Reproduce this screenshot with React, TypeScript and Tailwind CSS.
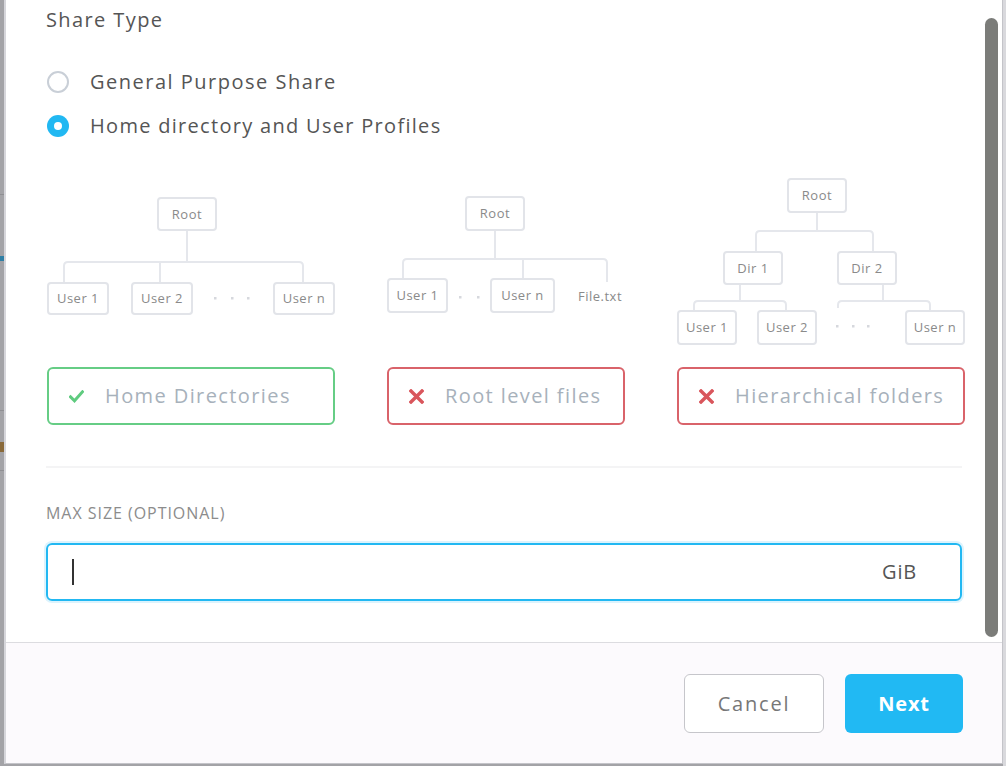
import React from "react";

const FONT = { fontFamily: '"Open Sans", "Noto Sans", sans-serif' };

type BoxProps = { x: number; y: number; w: number; h: number; label: string };
const Box = ({ x, y, w, h, label }: BoxProps) => (
  <g>
    <rect x={x + 1} y={y + 1} width={w - 2} height={h - 2} rx={3} fill="white" stroke="#e2e4e9" strokeWidth={2} />
    <text
      x={x + w / 2}
      y={y + h / 2 + 4.5}
      textAnchor="middle"
      fontSize={13}
      fill="#8a8a8a"
      letterSpacing={0.5}
      style={FONT}
    >
      {label}
    </text>
  </g>
);

const LC = "#e5e7ec";

const Bar = ({ x1, x2, y, d1, d2 }: { x1: number; x2: number; y: number; d1: number; d2: number }) => {
  const r = 4;
  return (
    <path
      d={`M${x1} ${d1} L${x1} ${y + r} Q${x1} ${y} ${x1 + r} ${y} L${x2 - r} ${y} Q${x2} ${y} ${x2} ${y + r} L${x2} ${d2}`}
      fill="none"
      stroke={LC}
      strokeWidth={2}
    />
  );
};
const VLine = ({ x, y1, y2 }: { x: number; y1: number; y2: number }) => (
  <line x1={x} y1={y1} x2={x} y2={y2} stroke={LC} strokeWidth={2} />
);
const Dots = ({ xs, y }: { xs: number[]; y: number }) => (
  <g>
    {xs.map((x) => (
      <rect key={x} x={x - 1} y={y - 1} width={2.5} height={2.5} fill="#d6d8dd" />
    ))}
  </g>
);

const Diagram1 = () => (
  <svg width={288} height={180} className="block shrink-0">
    <VLine x={140} y1={61} y2={92} />
    <Bar x1={17} x2={256} y={92} d1={112} d2={112} />
    <VLine x={113} y1={92} y2={112} />
    <Box x={110} y={27} w={60} h={34} label="Root" />
    <Box x={0} y={112} w={62} h={33} label="User 1" />
    <Box x={84} y={112} w={62} h={33} label="User 2" />
    <Dots xs={[168, 185, 201]} y={128} />
    <Box x={226} y={112} w={62} h={33} label="User n" />
  </svg>
);

const Diagram2 = () => (
  <svg width={238} height={180} className="block shrink-0">
    <VLine x={108} y1={61} y2={89} />
    <Bar x1={16} x2={220} y={89} d1={108} d2={112} />
    <VLine x={136} y1={89} y2={108} />
    <Box x={78} y={26} w={60} h={35} label="Root" />
    <Box x={0} y={108} w={61} h={35} label="User 1" />
    <Dots xs={[73, 91]} y={127} />
    <Box x={103} y={108} w={65} h={35} label="User n" />
    <text x={191} y={131} fontSize={13} fill="#8a8a8a" letterSpacing={0.5} style={FONT}>
      File.txt
    </text>
  </svg>
);

const Diagram3 = () => (
  <svg width={288} height={180} className="block shrink-0">
    <VLine x={140} y1={43} y2={61} />
    <Bar x1={79} x2={196} y={61} d1={81} d2={81} />
    <Box x={110} y={8} w={60} h={35} label="Root" />
    <Box x={46} y={81} w={60} h={34} label="Dir 1" />
    <Box x={160} y={81} w={60} h={34} label="Dir 2" />
    <VLine x={63} y1={115} y2={131} />
    <Bar x1={17} x2={109} y={131} d1={140} d2={140} />
    <VLine x={206} y1={115} y2={131} />
    <Bar x1={161} x2={253} y={131} d1={138} d2={140} />
    <Box x={0} y={140} w={60} h={35} label="User 1" />
    <Box x={80} y={140} w={60} h={35} label="User 2" />
    <Dots xs={[160, 176, 191]} y={156} />
    <Box x={228} y={140} w={60} h={35} label="User n" />
  </svg>
);

const CheckIcon = () => (
  <svg width={15} height={13} viewBox="0 0 15 13" className="block">
    <path d="M1.5 6.8 L5.5 10.8 L13.5 1.8" fill="none" stroke="#5fcb7f" strokeWidth={3} strokeLinecap="square" />
  </svg>
);
const XIcon = () => (
  <svg width={15} height={15} viewBox="0 0 15 15" className="block">
    <path d="M2 2 L13 13 M13 2 L2 13" fill="none" stroke="#d9565c" strokeWidth={3.4} strokeLinecap="square" />
  </svg>
);

const Card = ({ ok, label, w }: { ok: boolean; label: string; w: string }) => (
  <div
    className={`${w} shrink-0 h-[58px] rounded-[6px] border-2 flex items-center pl-[19px] ${
      ok ? "border-[#66cd85]" : "border-[#d9636a]"
    }`}
  >
    <div className="w-[16px] flex justify-center">{ok ? <CheckIcon /> : <XIcon />}</div>
    <span className="ml-[21px] text-[20px] leading-[28px] tracking-[0.07em] text-[#a7b1bb] whitespace-nowrap">
      {label}
    </span>
  </div>
);

export default function App() {
  return (
    <div className="relative w-[1006px] h-[766px] bg-[#a3a3a7] overflow-hidden" style={FONT}>
      {/* backdrop marks */}
      <div className="absolute left-0 top-[256px] w-[4px] h-[5px] bg-[#2f7fa5]" />
      <div className="absolute left-0 top-[442px] w-[4px] h-[10px] bg-[#8a6a3a]" />
      <div className="absolute left-0 top-[194px] w-[4px] h-px bg-[#8f8f93]" />
      <div className="absolute left-0 top-[410px] w-[4px] h-px bg-[#8f8f93]" />
      <div className="absolute left-0 top-[470px] w-[4px] h-px bg-[#8f8f93]" />
      <div className="absolute right-0 top-0 w-[3px] h-[766px] bg-[#d9d9dd]" />

      <div className="ml-[4px] w-[999px] h-[764px] flex flex-col border-l-2 border-r border-b border-l-[#d6d6db] border-r-[#c4c4c9] border-b-[#c4c4c9] bg-white relative">
        {/* content */}
        <div className="relative h-[642px] bg-white pl-[40px] pr-[40px] pt-[6px]">
          <div className="text-[20px] leading-[28px] tracking-[0.07em] text-[#555555]">Share Type</div>

          <div className="mt-[34px] flex items-center h-[28px] pl-px">
            <div className="w-[22px] h-[22px] rounded-full border-2 border-[#c9cfd7] bg-white" />
            <span className="ml-[21px] text-[20px] leading-[28px] tracking-[0.075em] text-[#555555]">
              General Purpose Share
            </span>
          </div>
          <div className="mt-[16px] flex items-center h-[28px] pl-px">
            <div className="w-[22px] h-[22px] rounded-full bg-[#21b8f2] flex items-center justify-center">
              <div className="w-[8px] h-[8px] rounded-full bg-white" />
            </div>
            <span className="ml-[21px] text-[20px] leading-[28px] tracking-[0.065em] text-[#555555]">
              Home directory and User Profiles
            </span>
          </div>

          <div className="mt-[30px] ml-px w-[918px] flex gap-[52px] h-[180px]">
            <Diagram1 />
            <Diagram2 />
            <Diagram3 />
          </div>

          <div className="mt-[17px] ml-px w-[918px] flex gap-[52px]">
            <Card ok label="Home Directories" w="w-[288px]" />
            <Card ok={false} label="Root level files" w="w-[238px]" />
            <Card ok={false} label="Hierarchical folders" w="w-[288px]" />
          </div>

          <div className="mt-[41px] h-[2px] w-[916px] bg-[#f4f4f5]" />

          <div className="mt-[33px] text-[16px] leading-[24px] tracking-[0.06em] text-[#8c8c8c]">
            MAX SIZE (OPTIONAL)
          </div>

          <div className="mt-[18px] w-[916px] h-[58px] rounded-[6px] border-2 border-[#22b8f2] shadow-[0_0_0_2px_#dcf3fd] flex items-center pl-[24px] pr-[43px]">
            <div className="w-[2px] h-[26px] bg-[#333333]" />
            <span className="ml-auto text-[20px] leading-[28px] tracking-[0.04em] text-[#555555]">GiB</span>
          </div>

          {/* scrollbar */}
          <div className="absolute right-[4px] top-[18px] w-[13px] h-[619px] rounded-full bg-[#7b7c79]" />
        </div>

        {/* footer */}
        <div className="h-[121px] border-t border-[#dcdce0] bg-[#fcfafd] flex justify-end items-start pt-[31px] pr-[39px] gap-[21px]">
          <button className="w-[140px] h-[59px] rounded-[6px] border border-[#c6c6cb] bg-white text-[20px] tracking-[0.09em] text-[#777777]">
            Cancel
          </button>
          <button className="w-[118px] h-[59px] rounded-[6px] bg-[#21b9f3] text-[20px] font-bold tracking-[0.04em] text-white">
            Next
          </button>
        </div>
      </div>
    </div>
  );
}
